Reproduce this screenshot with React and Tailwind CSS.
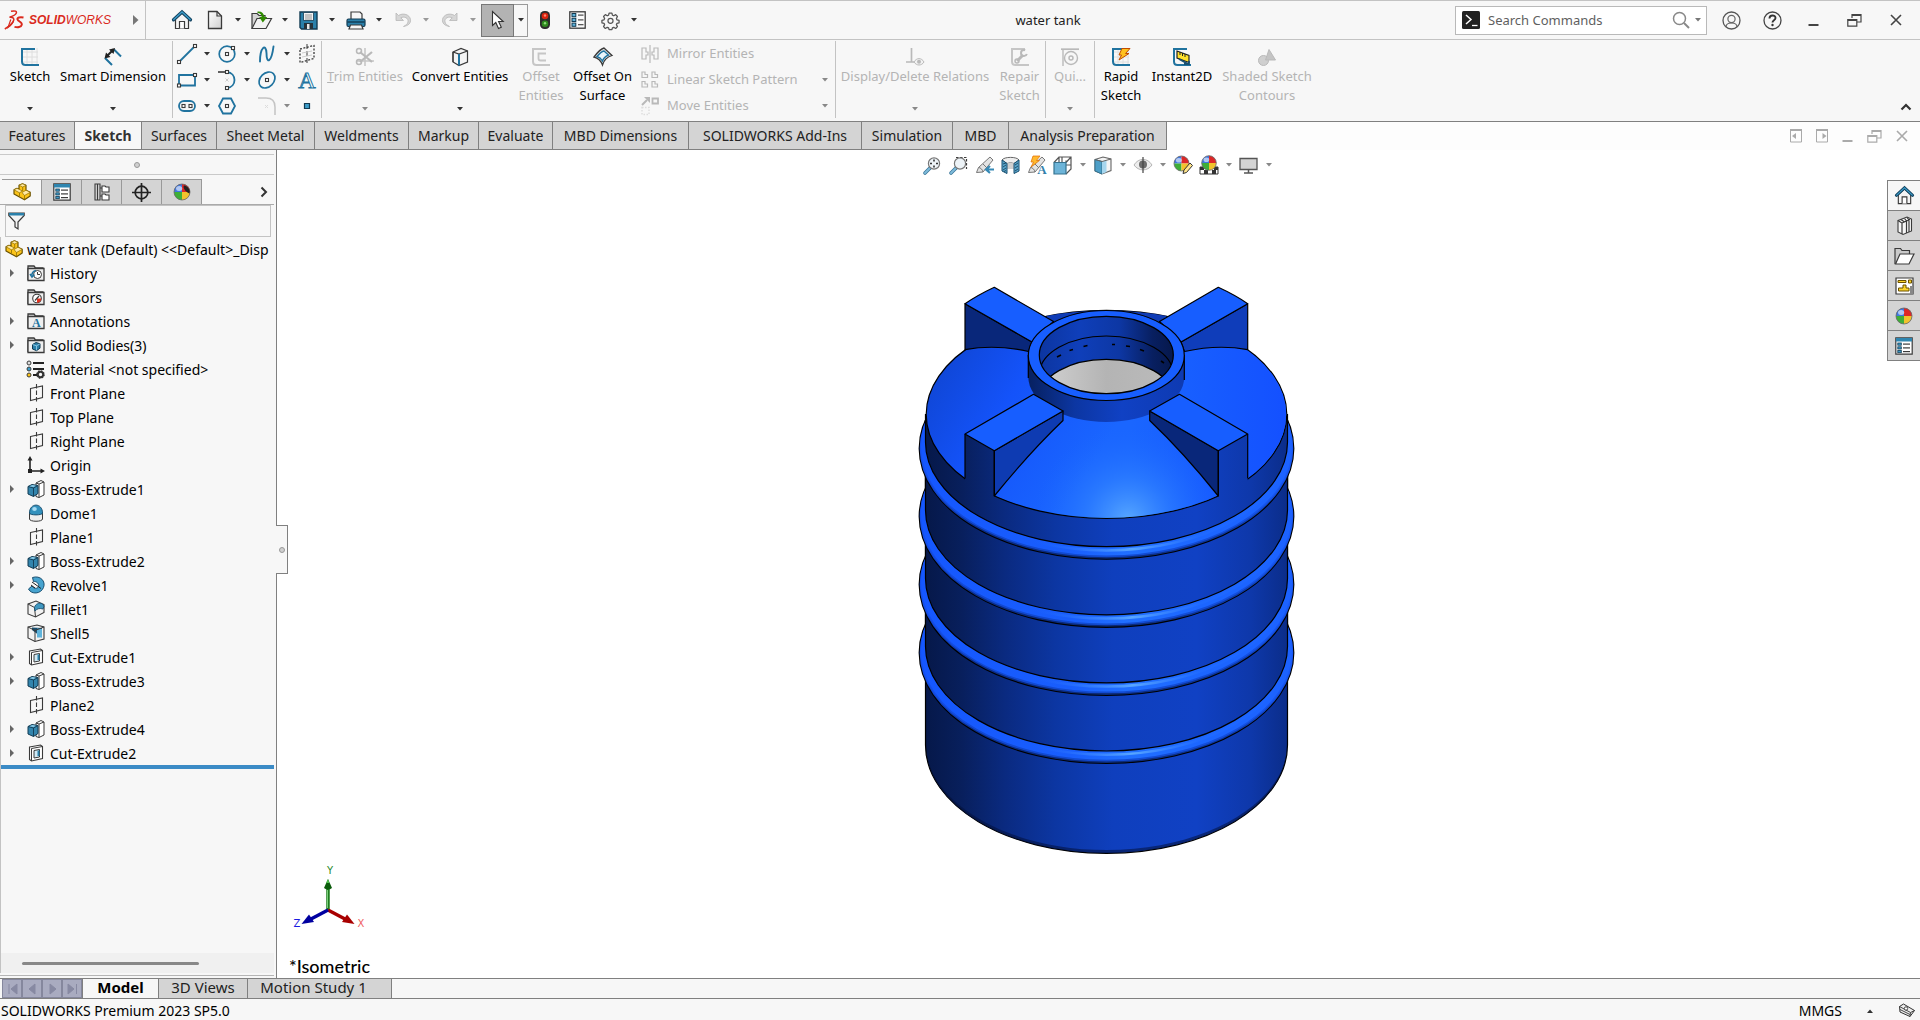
import React from "react";

const B = "#20739f";
const D = "#3a3a3a";
const G = "#b9b9b9";

function Svg({ w = 18, h = 18, vb, children, className = "" }) {
  return (
    <svg
      width={w}
      height={h}
      viewBox={vb || `0 0 ${w} ${h}`}
      fill="none"
      className={`shrink-0 overflow-visible ${className}`}
      aria-hidden="true"
    >
      {children}
    </svg>
  );
}

function Caret({ color = "#333" }) {
  return (
    <Svg w={6} h={4}>
      <path d="M0 0h6L3 3.5z" fill={color} />
    </Svg>
  );
}

/* ---------- title bar icons ---------- */

const DsLogo = () => (
  <Svg w={21} h={20}>
    <path d="M7 1.300C11 .3 13.500 1.200 12 3.600C11 5.200 8.500 6.300 5.500 7.200C9.500 7 11 8.800 9 12C7 15 4 17.300 .8 19" stroke="#da291c" strokeWidth="1.500" />
    <path d="M6.800 9.500L4 17.500C7 15.500 9 12.500 9.300 10.500" stroke="#da291c" strokeWidth="1.200" />
    <path d="M19.500 7.500C16 6.800 13 7.500 13.500 9.500C14 11.500 18.500 12 17.800 14.800C17.200 17.300 13.500 17.600 10.500 16.800" stroke="#da291c" strokeWidth="1.900" />
  </Svg>
);

const HomeIcon = ({ w = 20, h = 20 }) => (
  <Svg w={w} h={h} vb="0 0 20 20">
    <path d="M3.500 9v9.500h13V9L10 3z" fill="#f4f4f4" stroke={D} strokeWidth="1.200" />
    <path d="M7.500 18.500V11.500h5v7" stroke={D} fill="#fff" strokeWidth="1.200" />
    <path d="M1.500 9.800L10 2l8.500 7.800" stroke="#12415e" strokeWidth="3.200" strokeLinecap="round" />
    <path d="M1.800 9.600L10 2l8.200 7.600" stroke="#3c9cc9" strokeWidth="1.300" strokeLinecap="round" />
  </Svg>
);

const NewIcon = () => (
  <Svg w={16} h={20}>
    <defs>
      <linearGradient id="pg" x1="0" y1="0" x2="1" y2="1"><stop stopColor="#fff" /><stop offset="1" stopColor="#cfcfcf" /></linearGradient>
    </defs>
    <path d="M1.500 1.500h8.500l4.500 4.500v12.500h-13z" fill="url(#pg)" stroke={D} strokeWidth="1.300" />
    <path d="M10 1.500V6h4.500" stroke={D} strokeWidth="1.200" />
  </Svg>
);

const OpenIcon = () => (
  <Svg w={21} h={20}>
    <path d="M1 18.500V3.500h5l2 2h6v4" fill="#d4d4d4" stroke={D} strokeWidth="1.200" />
    <path d="M1 18.500L6 8.500h14.500L15 18.500z" fill="#f2f2f2" stroke={D} strokeWidth="1.200" />
    <path d="M6.500 1.500C10.500 1 13 3 13.300 7h3L11.800 12.500 8.200 7h2.500C10.500 4.500 9 3 6.500 3z" fill="#2f8a00" />
  </Svg>
);

const SaveIcon = () => (
  <Svg w={19} h={19}>
    <path d="M1 1h17v17H2.500L1 16.500z" fill="#2a80aa" stroke="#123a52" strokeWidth="1.400" />
    <path d="M4.500 1.500h10v8h-10z" fill="#f3f3f3" stroke="#123a52" strokeWidth=".8" />
    <path d="M6 4h7M6 6h7M6 8h7" stroke="#888" strokeWidth=".9" />
    <path d="M5 12h9v6H5z" fill="#26333b" />
    <path d="M8 13h2.500v5H8z" fill="#e8e8e8" />
  </Svg>
);

const PrintIcon = () => (
  <Svg w={20} h={19}>
    <path d="M5 8V1h9l2 2v5" fill="#f6f6f6" stroke={D} strokeWidth="1.200" />
    <rect x="1" y="8" width="18" height="7.500" rx="1.500" fill="#2a80aa" stroke="#123a52" strokeWidth="1.200" />
    <path d="M1.500 11h17" stroke="#123a52" strokeWidth="1.400" />
    <path d="M4.500 14h11l1.500 4h-14z" fill="#f6f6f6" stroke={D} strokeWidth="1.200" />
  </Svg>
);

const UndoIcon = ({ flip }) => (
  <Svg w={18} h={16} className={flip ? "-scale-x-100" : ""}>
    <path d="M2 1v7.500h7.500L6.800 5.800c3.500-1.800 8 .2 7.200 4.200-.4 2-2 3.200-4.500 4.500 5-.8 7.500-3.500 7-7C15.700 2.500 9 .5 4.500 3.500z" fill="#d6d6d6" stroke="#b8b8b8" strokeWidth=".8" />
  </Svg>
);

const CursorIcon = () => (
  <Svg w={14} h={20}>
    <path d="M1.500 1.500v14l3.300-3 2.700 6 2.800-1.300-2.700-5.700h4.600z" fill="#fff" stroke="#333" strokeWidth="1.100" />
  </Svg>
);

const TrafficIcon = () => (
  <Svg w={12} h={18}>
    <rect x="1" y="0" width="10" height="18" rx="4.500" fill="#2d2d2d" />
    <circle cx="6" cy="5" r="3.300" fill="#d9230f" /><circle cx="6" cy="4.500" r="1.200" fill="#ff8a70" />
    <circle cx="6" cy="12.800" r="3.300" fill="#2f8a1e" /><circle cx="6" cy="12.300" r="1.200" fill="#8fdc7a" />
  </Svg>
);

const ListIcon = () => (
  <Svg w={17} h={18}>
    <rect x=".8" y=".8" width="15.400" height="16.400" fill="#fafafa" stroke={D} strokeWidth="1.300" />
    {[2.500, 7.300, 12.100].map((y) => (
      <g key={y}>
        <rect x="3" y={y} width="3.800" height="3.200" fill="#5fb4dc" stroke="#123a52" />
        <path d={`M9 ${y + 1.600}h5.500`} stroke={D} strokeWidth="1.100" />
      </g>
    ))}
  </Svg>
);

const GearIcon = () => (
  <Svg w={17} h={17} vb="0 0 24 24">
    <path d="M10 1.500h4l.7 3 1.900.8 2.700-1.600 2.500 2.600-1.500 2.800.8 1.900 3 .8v3.400l-3 .8-.8 1.900 1.500 2.700-2.500 2.600-2.700-1.600-1.900.8-.7 2.600h-4l-.7-2.600-1.900-.8-2.700 1.600-2.500-2.600 1.500-2.700-.8-1.900-3-.8v-3.400l3-.8.8-1.900-1.500-2.800 2.500-2.600L7.400 5.300l1.900-.8z" stroke="#555" strokeWidth="1.800" strokeLinejoin="round" />
    <circle cx="12" cy="12.500" r="3.600" stroke="#555" strokeWidth="1.700" />
  </Svg>
);

const RestoreIcon = ({ color = "#444", s = 15 }) => (
  <Svg w={s} h={s} vb="0 0 15 15">
    <path d="M5 5V1.500h9V9h-4" stroke={color} strokeWidth="1.200" /><path d="M5 2h9" stroke={color} strokeWidth="2" />
    <path d="M.8 6.500h9v6.700h-9z" stroke={color} strokeWidth="1.200" /><path d="M.8 7h9" stroke={color} strokeWidth="2" />
  </Svg>
);
const CloseIcon = ({ color = "#444" }) => (
  <Svg w={12} h={12}><path d="M1 1l10 10M11 1L1 11" stroke={color} strokeWidth="1.600" /></Svg>
);
const MinIcon = ({ color = "#444" }) => (
  <Svg w={11} h={12}><path d="M.5 11h10" stroke={color} strokeWidth="2" /></Svg>
);

/* ---------- ribbon icons ---------- */

const Sq = ({ x, y, c = D }) => <rect x={x - 1.500} y={y - 1.500} width="3" height="3" fill="#fff" stroke={c} strokeWidth="1.100" />;
const GridLines = ({ x = 4, y = 1 }) => (
  <path d={`M${x + 3} ${y}v17M${x + 8} ${y}v17M${x + 13} ${y}v17M${x - 2} ${y + 4}h16M${x - 2} ${y + 9}h16M${x - 2} ${y + 14}h16`} stroke="#dedede" />
);

const SketchIcon = ({ c = B, children, grid = true }) => (
  <Svg w={20} h={20}>
    {grid && <GridLines />}
    <path d="M15 2H2v12.500q0 3.500 3.500 3.500H19" stroke={c} strokeWidth="2" />
    {children}
  </Svg>
);
const SmartDimIcon = () => (
  <Svg w={20} h={20}>
    <path d="M2 11l7 7M11 2.500l7 7" stroke={B} strokeWidth="2" />
    <path d="M3.500 9.500l7-7" stroke="#222" strokeWidth="2" />
    <path d="M1.500 11.500l1.500-6 4.500 4.500zM12 1l-1.500 6L6 2.500z" fill="#222" />
  </Svg>
);
const LineIcon = () => (<Svg w={20} h={20}><path d="M2 18L18 2" stroke={B} strokeWidth="1.800" /><Sq x={2} y={18} /><Sq x={18} y={2} /></Svg>);
const RectIcon = () => (<Svg w={20} h={16}><path d="M2 3h16v10.500H2z" stroke={B} strokeWidth="1.800" /><Sq x={2} y={13.500} /><Sq x={18} y={3} /></Svg>);
const SlotIcon = () => (<Svg w={18} h={12}><rect x="1" y="1" width="16" height="10" rx="5" stroke={B} strokeWidth="1.800" /><Sq x={5.500} y={6} /><Sq x={12.500} y={6} /></Svg>);
const CircleIcon = () => (<Svg><circle cx="9" cy="9" r="7.800" stroke={B} strokeWidth="1.700" /><Sq x={9} y={9} /><Sq x={15} y={3} /></Svg>);
const ArcIcon = () => (
  <Svg w={20} h={20}>
    <path d="M1 2h9" stroke={D} strokeWidth="1.600" /><path d="M10 2c10 1 10 15 0 16" stroke={B} strokeWidth="1.800" />
    <path d="M8.500 8.500l3 3m0-3l-3 3" stroke="#ccc" /><Sq x={10} y={2} /><Sq x={10} y={18} />
  </Svg>
);
const PolyIcon = () => (<Svg><path d="M5 1.500h8L17 9l-4 7.500H5L1 9z" stroke={B} strokeWidth="1.800" /><Sq x={9} y={9} /></Svg>);
const SplineIcon = () => (<Svg><path d="M2 16.500C2 2 8-2 8.500 8c0 12 5 9 7-6.500" stroke={B} strokeWidth="1.900" strokeLinecap="round" /></Svg>);
const EllipseIcon = () => (<Svg><ellipse cx="9" cy="9" rx="9" ry="6.800" transform="rotate(-45 9 9)" stroke={B} strokeWidth="1.700" /><Sq x={9} y={9} /></Svg>);
const FilletGrayIcon = () => (<Svg><path d="M0 1h8c6 0 9 3 9 9v8" stroke="#c4c4c4" strokeWidth="1.500" /><path d="M7 8l3 3m0-3l-3 3" stroke="#ddd" /></Svg>);
const PlaneDashIcon = () => (
  <Svg w={18} h={20}>
    <path d="M2 5l14-3.500v13L2 18.500z" stroke={D} strokeWidth="1.300" strokeDasharray="2 1.500" />
    <path d="M9 0v20" stroke={D} strokeDasharray="5 2" /><path d="M4 9l10-2M4 13l10-2" stroke="#ccc" />
  </Svg>
);
const TextIcon = () => (
  <Svg w={20} h={18}>
    <text x="10" y="17" fontFamily="Liberation Serif, serif" fontSize="24" textAnchor="middle" fill="#fff" stroke={B} strokeWidth="1">A</text>
  </Svg>
);
const PointIcon = () => (<Svg w={8} h={8}><path d="M1.500 1.500h5v5h-5z" fill="#3c9cc9" stroke="#123a52" strokeWidth="1.200" /></Svg>);

const TrimIcon = () => (
  <Svg w={20} h={20}>
    <path d="M10 1v18M2 14h17" stroke="#c6c6c6" strokeWidth="1.600" />
    <path d="M5 5l12 10M5 15L17 5" stroke={G} strokeWidth="2.200" />
    <circle cx="4" cy="4" r="2.500" stroke={G} strokeWidth="1.500" /><circle cx="4" cy="15" r="2.500" stroke={G} strokeWidth="1.500" />
  </Svg>
);
const ConvertIcon = () => (
  <Svg w={18} h={20}>
    <path d="M2 5l8-3.500 6.500 2.500v11L8 18.500 2 15z" fill="#f4f4f4" stroke={D} strokeWidth="1.200" />
    <path d="M2 5l6 2 8.500-3M2 5v10" stroke={D} strokeWidth="1.200" />
    <path d="M8 7v11.500" stroke={B} strokeWidth="2" />
  </Svg>
);
const OffsetIcon = () => (
  <Svg w={20} h={20}>
    <path d="M15 2H2v12.500q0 3.500 3.500 3.500H19" stroke="#c6c6c6" strokeWidth="2" /><path d="M15 6.500H7.500v5q0 2 2 2H15" stroke="#c6c6c6" strokeWidth="1.800" />
  </Svg>
);
const OffsetSurfIcon = () => (
  <Svg w={20} h={20}>
    <path d="M1 10C4 6 7 2 11 1l8 7.500c-5 1.500-8 4.500-9.500 9.500C8 14 5 11 1 10z" fill="#e9e9e9" stroke={D} strokeWidth="1.300" />
    <path d="M4 9.500C6.500 6.500 8.500 4.500 11 4l4.500 4C12 9.500 10.500 11 9.500 14 8 11.500 6.500 10.300 4 9.500z" fill="#eaf6fc" stroke={B} strokeWidth="1.400" />
  </Svg>
);
const MirrorIcon = () => (
  <Svg><path d="M9 0v18" stroke={G} strokeWidth="1.200" /><path d="M1 3h4v4h2v3H5v4H1zM17 3h-4v4h-2v3h2v4h4z" stroke={G} strokeWidth="1.200" /></Svg>
);
const PatternIcon = () => (
  <Svg>{[[1, 1], [11, 1], [1, 10.500], [11, 10.500]].map(([x, y]) => (
    <path key={`${x}${y}`} d={`M${x} ${y}h3v2.500h2.500v3H${x}z`} stroke={G} strokeWidth="1.200" />
  ))}</Svg>
);
const MoveIcon = () => (
  <Svg>
    <path d="M1 8L6 3" stroke={G} strokeWidth="2" /><path d="M3 0h6v6z" fill={G} /><path d="M11.500 1.500h5.500v5h-5.500z" stroke={G} strokeWidth="1.800" />
    <path d="M1 10.500h7v7H1z" stroke="#dedede" strokeWidth="1.500" strokeDasharray="1.500 1.500" />
  </Svg>
);
const DisplayRelIcon = () => (
  <Svg w={20} h={20}>
    <path d="M6.500 1v14M1 15h10" stroke={G} strokeWidth="1.700" /><path d="M9 15c2.500-4.500 7.500-4.500 10 0-2.500 4-7.500 4-10 0z" fill="#f2f2f2" stroke={G} /><circle cx="14" cy="14.800" r="2" fill={G} />
  </Svg>
);
const RepairIcon = () => (
  <SketchIcon c="#c6c6c6" grid={false}>
    <path d="M7 14l6-6" stroke={G} strokeWidth="3" /><circle cx="14" cy="6" r="3" stroke={G} strokeWidth="2" strokeDasharray="14 5" strokeDashoffset="-1" /><circle cx="7" cy="14" r="2" stroke={G} strokeWidth="1.500" />
  </SketchIcon>
);
const QuickIcon = () => (
  <Svg w={18} h={18}><path d="M0 1.200h18" stroke={G} strokeWidth="1.700" /><path d="M2 1v17" stroke={G} strokeWidth="1.400" /><circle cx="10" cy="10" r="6.500" stroke={G} strokeWidth="1.400" /><circle cx="10" cy="10" r="2" stroke={G} strokeWidth="1.500" /></Svg>
);
const RapidIcon = () => (
  <SketchIcon><path d="M11 1.500h8l-4.500 5h3.500L8 13l2.500-5H8z" fill="#ffc21f" stroke="#c14b00" /></SketchIcon>
);
const InstantIcon = () => (
  <SketchIcon grid={false}>
    <path d="M5 4l12 4.500v7L5 11z" fill="#ffe12b" stroke="#222" strokeWidth="1.200" /><path d="M8 5v3M10.500 6v3M13 7v3" stroke="#222" /><path d="M7 12l9 5M12 17h5v-3" stroke="#184f70" strokeWidth="1.800" />
  </SketchIcon>
);
const ShadedIcon = () => (
  <Svg><circle cx="5.500" cy="12.500" r="5" fill="#cfcfcf" stroke={G} /><path d="M11 1.500l6.500 10.500H7.500z" fill="#c4c4c4" stroke={G} /></Svg>
);

/* ---------- feature tree icons ---------- */

const PartIcon = () => (
  <Svg w={18} h={18}>
    <path d="M6 2.200L9.500.800 13 2.300V7.200L17.200 9.300V13L11.500 16.800 1 11V6.800L4 5.300 6 6.200z" fill="#fcc419" stroke="#6b5200" strokeWidth="1.200" strokeLinejoin="round" />
    <path d="M6 2.200L9.500.800 13 2.300 9.700 4zM1 6.800L4 5.300 9.500 8l-3 1.800zM9 9.500L13 7.200l4.200 2.100-5.700 3.200z" fill="#ffe9a3" stroke="#8f6e00" strokeWidth=".7" strokeLinejoin="round" />
    <path d="M9.700 4v4M6.500 9.800V13M11.500 12.500v4" stroke="#8f6e00" strokeWidth=".8" />
  </Svg>
);
const PropsIcon = ({ w = 18, h = 18 }) => (
  <Svg w={w} h={h} vb="0 0 18 18">
    <path d="M.8.800h16.400v16.400H.8z" fill="#fff" stroke={D} strokeWidth="1.200" /><path d="M1 1h16v3.500H1z" fill="#2f86b0" />
    {[6, 9.800, 13.500].map((y) => (<g key={y}><rect x="2.800" y={y} width="3.500" height="2.200" fill="#3c9cc9" stroke="#123a52" strokeWidth=".8" /><path d={`M8 ${y + 1.100}h7`} stroke={D} strokeWidth="1.200" /></g>))}
  </Svg>
);
const ConfigIcon = () => (
  <Svg w={16} h={18}>
    <path d="M1 1h5v16H1zM3.500 1v16M6 5h4M6 13h4" stroke={D} strokeWidth="1.100" /><path d="M8 3h3l1 1h3v5H8zM8 11h3l1 1h3v5H8z" fill="#fff" stroke={D} strokeWidth="1.100" />
  </Svg>
);
const TargetIcon = () => (<Svg w={19} h={19}><circle cx="9.500" cy="9.500" r="6.300" stroke="#222" strokeWidth="1.700" /><path d="M9.500 0v19M0 9.500h19" stroke="#222" strokeWidth="1.700" /></Svg>);
const Ball = ({ cx, cy, r }) => (
  <g>
    <path d={`M${cx} ${cy}V${cy - r}A${r} ${r} 0 0 0 ${cx - r} ${cy}z`} fill="#3f77e0" />
    <path d={`M${cx} ${cy}V${cy - r}A${r} ${r} 0 0 1 ${cx + r} ${cy}z`} fill="#dd2727" />
    <path d={`M${cx} ${cy}V${cy + r}A${r} ${r} 0 0 1 ${cx - r} ${cy}z`} fill="#3fae38" />
    <path d={`M${cx} ${cy}V${cy + r}A${r} ${r} 0 0 0 ${cx + r} ${cy}z`} fill="#f2c22c" />
    <circle cx={cx} cy={cy} r={r} stroke="#666" strokeWidth=".8" />
    <ellipse cx={cx - r / 2.800} cy={cy - r / 2.300} rx={r / 2.600} ry={r / 3.200} fill="#fff" opacity=".6" />
  </g>
);
const BallIcon = ({ dark }) => (<Svg><Ball cx={9} cy={9} r={8} />{dark && <path d="M11 2.500C9.500 4 12 9 16.500 10.500C17.500 7 15 3 11 2.500z" fill="#222" />}</Svg>);
const FunnelIcon = () => (
  <Svg w={17} h={18}><path d="M.8 1h15.400v2.500L10 10v7l-3-2v-5L.8 3.500z" fill="#f4f4f4" stroke={D} strokeWidth="1.200" /><path d="M1 1h15v2.500H1z" fill="#2a80aa" /></Svg>
);
const Folder = ({ children }) => (
  <Svg w={18} h={18}><path d="M1 16V2h6l1.500 2H16.500" fill="#dcdcdc" stroke={D} strokeWidth="1.300" /><path d="M1 4.500h16v12H1z" fill="#efefef" stroke={D} strokeWidth="1.300" />{children}</Svg>
);
const HistoryIcon = () => (<Folder><circle cx="10.500" cy="10.500" r="4" fill="#fff" stroke={D} /><path d="M10.500 8v2.500h2.500" stroke={D} /><path d="M9 6.500c-3 .5-4.500 3-4 5M3 10l2 3 2.500-2.500" stroke={B} strokeWidth="1.500" /></Folder>);
const SensorIcon = () => (<Folder><circle cx="10" cy="10.500" r="4.300" fill="#fff" stroke={D} strokeWidth="1.100" /><path d="M10 10.500l4.300 0A4.300 4.300 0 0 1 10 14.800z" fill="#e0301e" /><path d="M8 12.500l4-4.500" stroke={D} strokeWidth="1.200" /></Folder>);
const AnnoIcon = () => (<Folder><text x="9.300" y="14.800" fontFamily="Liberation Serif, serif" fontSize="12" fontWeight="700" textAnchor="middle" fill={B}>A</text></Folder>);
const SolidIcon = () => (<Folder><path d="M5.500 8.500l3.500-2 4 1.200v4.500l-3.500 2.500-4-1.700z" fill="#2a80aa" stroke="#123a52" /><path d="M5.500 8.500l4 1.300 3.500-2M9.500 9.800v4.500" stroke="#9fd4ee" strokeWidth=".8" /></Folder>);
const MaterialIcon = () => (
  <Svg w={19} h={19}>
    <path d="M7 3h11M7 9h11M7 15h5" stroke="#222" strokeWidth="2" />
    <circle cx="3" cy="3" r="2" fill="#ddd" stroke={D} /><circle cx="3" cy="9" r="2" fill="#3c9cc9" stroke={D} /><circle cx="3" cy="15" r="2" fill="#fcc419" stroke={D} />
    <circle cx="14.500" cy="14.500" r="2.700" stroke="#333" strokeWidth="2" /><circle cx="14.500" cy="14.500" r="3.700" stroke="#333" strokeWidth="1.200" strokeDasharray="1.500 1.400" />
  </Svg>
);
const PlaneIcon = () => (<Svg><path d="M3.500 4.500L15.500 2v11.500L3.500 16.500z" stroke={D} strokeWidth="1.100" /><path d="M9.500 0v18" stroke={D} strokeWidth="1.100" strokeDasharray="4.500 2" /></Svg>);
const OriginIcon = () => (<Svg w={18} h={18}><path d="M3 3v12h12" stroke="#222" strokeWidth="1.600" /><path d="M3 0l2.500 4.500h-5zM18 15l-4.500-2.500v5z" fill="#222" /><rect x="1" y="13" width="4" height="4" fill="#222" /></Svg>);
const BossIcon = () => (
  <Svg>
    <path d="M9 3l5-2.500 3 1.500v13l-5 2.500-3-1z" fill="#fff" stroke={D} /><path d="M12 4v13.500M12 4l5-2M9 3l3 1" stroke={D} />
    <path d="M1 6.500l4-2 6 1v8l-4.500 3L1 14z" fill="#3385ad" stroke="#123a52" /><path d="M1 6.500l5.500 1.500 4.500-2.500M6.500 8v8.500" stroke="#123a52" strokeWidth=".9" /><path d="M2.500 6.300l3-1.200 3.500.6-2.600 1.400z" fill="#8fcdea" />
  </Svg>
);
const DomeIcon = () => (<Svg><path d="M2.500 9v6c0 3 13 3 13 0V9z" fill="#eee" stroke={D} /><path d="M2.500 9C2.500-1.500 15.500-1.500 15.500 9c0 2.500-13 2.500-13 0z" fill="#3391bd" stroke="#184f70" /><ellipse cx="7.500" cy="5" rx="2.300" ry="2" fill="#a6dbf3" /></Svg>);
const RevolveIcon = () => (
  <Svg><path d="M5.500 1.500c8-2.500 13.500 4 11 10-2.500 6.500-12 7.500-15 1.500l3.500-3c2 3 5.500 3 6.500.5S9.500 5 6.500 5.500z" fill="#46a3cf" stroke="#184f70" /><path d="M5 6l9 6.500M4 9l4 3" stroke="#222" /></Svg>
);
const FilletIcon = () => (<Svg><path d="M1 4l8-3 8 3.500v8L8.500 17 1 14z" fill="#f2f2f2" stroke={D} strokeWidth="1.100" /><path d="M1 4l6.500 3.500 1 9.500" stroke={D} /><path d="M7.500 7.500C8.500 3.500 12 3 15 3.500l2 2.500-1 3c-3-1-6-.5-8 2z" fill="#3f97c0" stroke="#184f70" strokeWidth=".9" /></Svg>);
const ShellIcon = () => (<Svg><path d="M1 3l9-2 7 2v12l-9 2.500L1 14z" fill="#f2f2f2" stroke={D} strokeWidth="1.100" /><path d="M5 3.500l10 .5v9.500L5 6z" fill="#184f70" /><path d="M10 4.500l5 .5v8.500h-5z" fill="#5fb4dc" /><path d="M1 3l7 3.500v11M8 6.500L17 3" stroke={D} /></Svg>);
const CutIcon = () => (<Svg><path d="M2.500 3l11-2 2 1.500v12l-11 2.500-2-1.500z" fill="#fff" stroke={D} strokeWidth="1.100" /><path d="M4.500 4.500l11-2M4.500 4.500V17" stroke={D} /><path d="M7 6.500l5.500-1v7.500L7 14z" fill="#cfe9f5" stroke={D} /><path d="M10.500 6.500h2V12h-2z" fill="#2a80aa" /></Svg>);

/* ---------- heads-up toolbar icons ---------- */

const ZoomIcon = ({ area }) => (
  <Svg w={19} h={19}>
    {area && <path d="M7 1.500h10.500V13" stroke={D} strokeDasharray="2.500 1.500" strokeWidth="1.200" />}
    <path d="M2 17l5-5" stroke="#3a7699" strokeWidth="3.600" strokeLinecap="round" /><path d="M2 17l5-5" stroke="#7fbcdc" strokeWidth="2" strokeLinecap="round" />
    <circle cx="11" cy="7.500" r="5.600" fill="#edf3f7" stroke="#777" strokeWidth="1.200" />
    {!area && <path d="M11 3.500v2M11 9.500v2M7 7.500h2M13 7.500h2" stroke="#333" strokeWidth="1.600" />}
  </Svg>
);
const Scope = () => (<g><path d="M1.500 16.500l2-5L15 1l3 3L8 16z" fill="#e3e3e3" stroke="#777" /><path d="M3.500 11.500c2 0 4 2 4.500 4.500M8 8l4 4" stroke="#777" /></g>);
const PrevViewIcon = () => (<Svg w={20} h={19}><Scope /><path d="M19 13.500h-7m3-3.500l-4 3.500 4 3.500" stroke="#3689b5" strokeWidth="2.200" /></Svg>);
const SectionIcon = () => (
  <Svg w={19} h={19}>
    <path d="M1 4C3 .5 16 .5 18 4L13 7.500Q9.500 6 6 7.500z" fill="#eee" stroke="#666" />
    <path d="M6 7.500Q9.500 6 13 7.500V13H6z" fill="#d0d0d0" />
    <path d="M1 4l5 3.500V17.500L1 15zM13 7.500L18 4v11l-5 2.500z" fill="#5aa6cc" stroke="#184f70" />
    <path d="M2 8l3-1M2 11l3-2M2 14l3-2M3 15.500l2-1M14 9l3-2M14 12l3-2M14 15l3-2" stroke="#123a52" strokeWidth=".8" />
  </Svg>
);
const DynIcon = () => (<Svg w={20} h={19}><Scope /><path d="M6 0h7L9.500 4.500h3L4 11l2.500-5H4z" fill="#ffb92e" stroke="#e06c00" strokeWidth=".7" /><text x="15" y="18" fontFamily="Liberation Serif, serif" fontSize="13" fontWeight="700" textAnchor="middle" fill="#3380ab">A</text></Svg>);
const ViewIcon = () => (<Svg w={19} h={19}><path d="M1 6.500L6 1h12v12l-5 5M6 1v5M18 1l-5 5.500M13 9h5M13 4.500v2M9 1v5" stroke="#555" strokeWidth="1.200" /><path d="M1 6.500h12V18H1z" fill="#6db4d8" stroke="#35728f" strokeWidth="1.200" /></Svg>);
const StyleIcon = () => (<Svg w={18} h={19}><path d="M1 3.500L9 1l8 2v11.500L8 18 1 15z" fill="#f4f4f4" stroke="#666" strokeWidth="1.100" /><path d="M1 3.500l7 2V18l-7-3z" fill="#4d9fc8" stroke="#35728f" /><path d="M8 5.500L12.500 4v12L8 18z" fill="#a6d6ee" /><path d="M1 3.500l7 2L17 3" stroke="#666" /></Svg>);
const EyeIcon = () => (<Svg w={20} h={18}><path d="M1 9c4.500-7.500 13.500-7.500 18 0-4.500 6.500-13.500 6.500-18 0z" fill="#ededed" stroke="#b5b5b5" /><circle cx="10" cy="8.500" r="4" fill="#6d6d6d" /><path d="M10 1v16" stroke="#444" strokeWidth="1.200" /></Svg>);
const BallPenIcon = () => (<Svg w={20} h={20}><Ball cx={8.500} cy={8.500} r={7.500} /><path d="M10 18.500l1-3.500 6-7 2.500 2.500-6 7z" fill="#ffe48a" stroke="#333" /></Svg>);
const SceneIcon = () => (<Svg w={20} h={20}><path d="M1 12h18v7H1z" fill="#fff" stroke="#333" /><path d="M1 12h4v3H1zM5 15h4v4H5zM13 15h4v4h-4zM15 12h4v3h-4z" fill="#333" /><Ball cx={10} cy={8} r={7.300} /></Svg>);
const MonitorIcon = () => (<Svg w={19} h={17}><path d="M1 1.500h17v11H1z" fill="#d4d4d4" stroke="#555" strokeWidth="1.300" /><path d="M9.500 13v3M5 16h9" stroke="#555" strokeWidth="1.500" /></Svg>);

const BooksIcon = () => (<Svg w={17} h={19}><path d="M2 4.500L11 1l4.500 2v12L7 18.500 2 16z" fill="#f6f6f6" stroke={D} strokeWidth="1.100" /><path d="M2 4.500L6 7v11M6 7l8-3.500M8.500 2.500L10.500 5v12M5 3.500L8.500 6M11 1.500l2 2.500v12" stroke={D} strokeWidth="1.200" /></Svg>);
const FolderOpenIcon = () => (<Svg w={21} h={18}><path d="M1 17V1.500h5.500l1.500 2h7.500V7" fill="#c9c9c9" stroke={D} strokeWidth="1.200" /><path d="M1.500 17L6 7h14l-5 10z" fill="#fff" stroke={D} strokeWidth="1.200" /></Svg>);
const PaletteIcon = () => (<Svg w={19} h={18}><path d="M1 1h17v16H1z" fill="#fff" stroke={D} strokeWidth="1.200" /><path d="M3 3.500h8v2H3zM13.500 3h3v3h-3zM8 8h3v3h3v3H3.500v-3H8z" fill="#fcd52a" stroke="#6b5000" /><path d="M15 9h3v8h-3z" fill="#888" /></Svg>);

/* ---------- shared controls ---------- */

function CaretButton({ label, color, className = "" }) {
  return (
    <button aria-label={label} className={`flex items-center justify-center ${className}`}>
      <Caret color={color} />
    </button>
  );
}

function QuickButton({ label, icon, menu, disabled }) {
  return (
    <div className="flex h-8 items-center">
      <button aria-label={label} className="flex h-full w-[33px] items-center justify-center">{icon}</button>
      {menu && <CaretButton label={`${label} options`} color={disabled ? "#999" : "#333"} className="h-full w-[14px]" />}
    </div>
  );
}

function BigButton({ icon, lines, width, disabled, menu, underline }) {
  return (
    <button className={`flex flex-col items-center pt-1.5 text-[13px] leading-[19px] ${width} ${disabled ? "text-[#b4b4b4]" : "text-black"}`}>
      <span className="flex h-[21px] items-center">{icon}</span>
      <span className="flex-1 whitespace-nowrap text-center">
        {lines.map((l, i) => (
          <span key={l} className="block">
            {underline && i === 0 ? (<><u>{l[0]}</u>{l.slice(1)}</>) : l}
          </span>
        ))}
      </span>
      {menu && <span className="mb-2"><Caret color={disabled ? "#888" : "#333"} /></span>}
    </button>
  );
}

const Sep = () => <div className="my-px w-px shrink-0 bg-[#c3c3c3]" />;

/* ---------- sections ---------- */

function TitleBar() {
  return (
    <header className="flex h-10 items-center border-y border-[#c3c3c3] bg-[#f7f7f7]">
      <div className="flex h-full w-[146px] items-center border-r border-[#c3c3c3] pl-1">
        <DsLogo />
        <span className="ml-1 flex-1 font-['Liberation_Sans',sans-serif] text-[12px] italic text-[#da291c]"><b>SOLID</b>WORKS</span>
        <button aria-label="Show menu" className="mr-1.5"><Svg w={6} h={10}><path d="M0 0l5.500 5L0 10z" fill="#777" /></Svg></button>
      </div>
      <nav aria-label="Quick access" className="ml-[19px] flex items-center">
        <QuickButton label="Home" icon={<HomeIcon />} />
        <QuickButton label="New" icon={<NewIcon />} menu />
        <QuickButton label="Open" icon={<OpenIcon />} menu />
        <QuickButton label="Save" icon={<SaveIcon />} menu />
        <QuickButton label="Print" icon={<PrintIcon />} menu />
        <QuickButton label="Undo" icon={<UndoIcon />} menu disabled />
        <QuickButton label="Redo" icon={<UndoIcon flip />} menu disabled />
        <div className="ml-px flex h-[33px]">
          <button aria-label="Select" className="flex w-[33px] items-center justify-center border border-[#777] bg-[#b3b3b3]"><CursorIcon /></button>
          <CaretButton label="Select options" className="w-[14px] border border-l-0 border-[#999]" />
        </div>
        <QuickButton label="Rebuild" icon={<TrafficIcon />} />
        <QuickButton label="File properties" icon={<ListIcon />} />
        <QuickButton label="Options" icon={<GearIcon />} menu />
      </nav>
      <h1 className="flex-1 pt-0.5 text-center text-[13px] text-[#222]">water tank</h1>
      <div className="mr-1 flex h-[29px] w-[252px] items-center border border-[#b9b9b9] bg-white pl-1.5">
        <Svg><rect width="18" height="18" rx="1.500" fill="#222" /><path d="M4 4l5 4.500L4 13" stroke="#fff" strokeWidth="1.500" /><path d="M10 14.500h5.500" stroke="#fff" strokeWidth="1.300" /></Svg>
        <input aria-label="Search Commands" placeholder="Search Commands" className="ml-2 w-0 flex-1 bg-transparent pt-0.5 text-[13px] outline-none placeholder:text-[#5f5f5f]" />
        <button aria-label="Search"><Svg><circle cx="7.500" cy="7.500" r="6" stroke="#888" strokeWidth="1.500" /><path d="M12 12l5 5" stroke="#888" strokeWidth="2" /></Svg></button>
        <CaretButton label="Search options" color="#777" className="w-4" />
      </div>
      <div className="flex items-center pr-1">
        <button aria-label="Account" className="flex w-[41px] justify-center"><Svg w={19} h={19}><circle cx="9.500" cy="9.500" r="8.500" stroke="#555" strokeWidth="1.300" /><circle cx="9.500" cy="8" r="3.600" stroke="#666" strokeWidth="1.200" /><path d="M4 16c0-3 2.500-4 5.500-4s5.500 1 5.500 4" stroke="#666" strokeWidth="1.200" /></Svg></button>
        <button aria-label="Help" className="flex w-[41px] justify-center"><Svg w={19} h={19}><circle cx="9.500" cy="9.500" r="8.500" stroke="#444" strokeWidth="1.300" /><path d="M6.500 7.500c0-4 6-4 6-.5 0 2.300-3 2.200-3 4.500" stroke="#333" strokeWidth="1.900" /><circle cx="9.500" cy="14" r="1.200" fill="#333" /></Svg></button>
        <button aria-label="Minimize" className="flex w-[41px] justify-center"><MinIcon /></button>
        <button aria-label="Restore" className="flex w-[41px] justify-center"><RestoreIcon /></button>
        <button aria-label="Close" className="flex w-[41px] justify-center"><CloseIcon /></button>
      </div>
    </header>
  );
}

const SKETCH_TOOLS = [
  ["Line", LineIcon, 1], ["Circle", CircleIcon, 1], ["Spline", SplineIcon, 1], ["Plane", PlaneDashIcon, 0],
  ["Rectangle", RectIcon, 1], ["Arc", ArcIcon, 1], ["Ellipse", EllipseIcon, 1], ["Text", TextIcon, 0],
  ["Slot", SlotIcon, 1], ["Polygon", PolyIcon, 0], ["Fillet", FilletGrayIcon, 2], ["Point", PointIcon, 0],
];

const ENTITY_TOOLS = [
  ["Mirror Entities", MirrorIcon, false],
  ["Linear Sketch Pattern", PatternIcon, true],
  ["Move Entities", MoveIcon, true],
];

function Ribbon() {
  return (
    <section aria-label="Sketch commands" className="flex h-[82px] border-b border-[#808080] bg-[#f7f7f7] pb-0.5">
      <div className="flex pr-1.5">
        <BigButton width="w-[60px]" icon={<SketchIcon />} lines={["Sketch"]} menu />
        <BigButton width="w-[106px]" icon={<SmartDimIcon />} lines={["Smart Dimension"]} menu />
      </div>
      <Sep />
      <div className="grid grid-cols-[40px_40px_40px_24px] grid-rows-3 px-0.5 pt-px">
        {SKETCH_TOOLS.map(([name, Icon, menu]) => (
          <div key={name} className="flex items-center">
            <button aria-label={name} className="flex w-6 items-center justify-center"><Icon /></button>
            {menu > 0 && <CaretButton label={`${name} options`} color={menu === 2 ? "#888" : "#333"} className="h-6 w-4" />}
          </div>
        ))}
      </div>
      <Sep />
      <div className="flex">
        <BigButton width="w-[86px]" icon={<TrimIcon />} lines={["Trim Entities"]} menu disabled underline />
        <BigButton width="w-[104px]" icon={<ConvertIcon />} lines={["Convert Entities"]} menu />
        <BigButton width="w-[58px]" icon={<OffsetIcon />} lines={["Offset", "Entities"]} disabled />
        <BigButton width="w-[65px]" icon={<OffsetSurfIcon />} lines={["Offset On", "Surface"]} />
        <div className="grid w-[200px] grid-rows-3 pl-1.5 pr-1 pt-px text-[13px] text-[#b4b4b4]">
          {ENTITY_TOOLS.map(([name, Icon, menu]) => (
            <div key={name} className="flex items-center">
              <button className="flex flex-1 items-center gap-2"><Icon />{name}</button>
              {menu && <CaretButton label={`${name} options`} color="#888" className="h-6 w-3" />}
            </div>
          ))}
        </div>
      </div>
      <Sep />
      <div className="flex">
        <BigButton width="w-[158px]" icon={<DisplayRelIcon />} lines={["Display/Delete Relations"]} menu disabled />
        <BigButton width="w-[51px]" icon={<RepairIcon />} lines={["Repair", "Sketch"]} disabled />
      </div>
      <Sep />
      <BigButton width="w-[48px]" icon={<QuickIcon />} lines={["Qui..."]} menu disabled />
      <Sep />
      <div className="flex">
        <BigButton width="w-[52px]" icon={<RapidIcon />} lines={["Rapid", "Sketch"]} />
        <BigButton width="w-[70px]" icon={<InstantIcon />} lines={["Instant2D"]} />
        <BigButton width="w-[100px]" icon={<ShadedIcon />} lines={["Shaded Sketch", "Contours"]} disabled />
      </div>
      <button aria-label="Collapse ribbon" className="mb-2 ml-auto mr-2 self-end"><Svg w={12} h={8}><path d="M1.500 6.500L6 2l4.500 4.500" stroke="#333" strokeWidth="2.200" /></Svg></button>
    </section>
  );
}

const TABS = [
  ["Features", "w-[75px]"], ["Sketch", "w-[67px]"], ["Surfaces", "w-[75px]"], ["Sheet Metal", "w-[98px]"], ["Weldments", "w-[94px]"],
  ["Markup", "w-[70px]"], ["Evaluate", "w-[74px]"], ["MBD Dimensions", "w-[136px]"], ["SOLIDWORKS Add-Ins", "w-[173px]"],
  ["Simulation", "w-[91px]"], ["MBD", "w-[56px]"], ["Analysis Preparation", "w-[158px]"],
];

function CommandTabs() {
  return (
    <div className="flex h-7 bg-[#fdfdfd]">
      <div role="tablist" className="flex border-b border-[#808080] text-[14px] text-[#222]">
        {TABS.map(([name, width]) => (
          <button
            key={name}
            role="tab"
            aria-selected={name === "Sketch"}
            className={`whitespace-nowrap border-r border-[#808080] ${width} ${name === "Sketch" ? "bg-[#f7f7f7] font-bold text-[#333]" : "bg-[#d4d4d4]"}`}
          >
            {name}
          </button>
        ))}
      </div>
      <div className="ml-auto flex items-center gap-3.5 pr-3">
        <button aria-label="Dock left"><Svg w={12} h={14}><path d="M.5 1h11v12H.5z" stroke="#aaa" /><path d="M0 1h12" stroke="#aaa" strokeWidth="2" /><path d="M6 4v6L2 7z" fill="#aaa" /></Svg></button>
        <button aria-label="Dock right"><Svg w={12} h={14}><path d="M.5 1h11v12H.5z" stroke="#aaa" /><path d="M0 1h12" stroke="#aaa" strokeWidth="2" /><path d="M6.500 4v6l4-3z" fill="#aaa" /></Svg></button>
        <button aria-label="Minimize document"><MinIcon color="#aaa" /></button>
        <button aria-label="Restore document"><RestoreIcon color="#aaa" /></button>
        <button aria-label="Close document"><CloseIcon color="#aaa" /></button>
      </div>
    </div>
  );
}

const TREE = [
  ["History", HistoryIcon, 1], ["Sensors", SensorIcon, 0], ["Annotations", AnnoIcon, 1], ["Solid Bodies(3)", SolidIcon, 1],
  ["Material <not specified>", MaterialIcon, 0], ["Front Plane", PlaneIcon, 0], ["Top Plane", PlaneIcon, 0], ["Right Plane", PlaneIcon, 0],
  ["Origin", OriginIcon, 0], ["Boss-Extrude1", BossIcon, 1], ["Dome1", DomeIcon, 0], ["Plane1", PlaneIcon, 0],
  ["Boss-Extrude2", BossIcon, 1], ["Revolve1", RevolveIcon, 1], ["Fillet1", FilletIcon, 0], ["Shell5", ShellIcon, 0],
  ["Cut-Extrude1", CutIcon, 1], ["Boss-Extrude3", BossIcon, 1], ["Plane2", PlaneIcon, 0], ["Boss-Extrude4", BossIcon, 1], ["Cut-Extrude2", CutIcon, 1],
];

const PANEL_TABS = [
  ["Feature tree", <PartIcon />], ["Properties", <PropsIcon />], ["Configurations", <ConfigIcon />],
  ["Dimension expert", <TargetIcon />], ["Display manager", <BallIcon dark />],
];

const Dot = () => <span className="block size-1.5 rounded-full border border-[#999] bg-[#d0d0d0]" />;

function FeaturePanel() {
  return (
    <aside className="relative z-10 flex w-[277px] shrink-0 flex-col border-r border-[#808080] bg-[#f7f7f7]">
      <div className="mr-0.5 mt-1 flex h-[21px] items-center justify-center border-y border-[#c9c9c9]"><Dot /></div>
      <div className="mr-0.5 mt-1 flex h-[26px] border-b border-[#aaa] pl-0.5">
        {PANEL_TABS.map(([name, icon], i) => (
          <button
            key={name}
            aria-label={name}
            className={`flex w-10 items-center justify-center border-r border-t border-[#999] ${i === 0 ? "bg-[#f7f7f7]" : "bg-[#d4d4d4]"}`}
          >
            {icon}
          </button>
        ))}
        <button aria-label="More tabs" className="ml-auto mr-1.5"><Svg w={8} h={12}><path d="M1.500 1.500L6 6l-4.500 4.500" stroke="#333" strokeWidth="2" /></Svg></button>
      </div>
      <label className="ml-[5px] mr-[5px] flex h-8 items-center border border-[#c3c3c3] pl-0.5">
        <FunnelIcon />
        <input aria-label="Filter tree" className="w-0 flex-1 bg-transparent text-[14px] outline-none" />
      </label>
      <div className="flex flex-1 flex-col border-l border-[#c3c3c3] pr-0.5 text-[14px] text-black">
        <button className="flex h-6 items-center whitespace-nowrap pl-1"><PartIcon /><span className="ml-1">water tank (Default) &lt;&lt;Default&gt;_Disp</span></button>
        <ul>
          {TREE.map(([name, Icon, open]) => (
            <li key={name} className="flex h-6 items-center">
              <span className="w-[25px] pl-[9px]">
                {open ? <button aria-label={`Expand ${name}`} className="block"><Svg w={4} h={8}><path d="M0 0l4 4-4 4z" fill="#666" /></Svg></button> : null}
              </span>
              <button className="flex items-center whitespace-nowrap"><span className="flex w-[19px] justify-center"><Icon /></span><span className="ml-[5px]">{name}</span></button>
            </li>
          ))}
        </ul>
        <div className="h-1 shrink-0 bg-[#3b8bc6]" />
        <div className="mt-auto flex h-5 shrink-0 items-center bg-[#f0f0f0]"><div className="ml-[21px] h-[3px] w-[177px] rounded bg-[#888]" /></div>
      </div>
      <div className="mb-0.5 mr-0.5 mt-0.5 h-px bg-[#b5b5b5]" />
      <button aria-label="Hide panel" className="absolute -right-3 top-[375px] flex h-[49px] w-3 items-center justify-center border border-l-0 border-[#808080] bg-[#f7f7f7]"><Dot /></button>
    </aside>
  );
}

function Ring({ cy }) {
  return (
    <g>
      <ellipse cx="1106.500" cy={cy} rx="181" ry="104.500" stroke="#000" strokeWidth="13.800" />
      <ellipse cx="1106.500" cy={cy} rx="181" ry="104.500" stroke="url(#ringDark)" strokeWidth="11.600" />
      <ellipse cx="1106.500" cy={cy - 1} rx="181" ry="104.500" stroke="url(#ringEdge)" strokeWidth="10.500" />
      <ellipse cx="1106.500" cy={cy - 2} rx="181" ry="104.500" stroke="url(#ringMid)" strokeWidth="9" />
      <ellipse cx="1106.500" cy={cy - 2.500} rx="181" ry="104.500" stroke="url(#ringHi)" strokeWidth="2.500" />
    </g>
  );
}

function BodySection({ cy }) {
  return <path d={`M925.500 421V${cy}A181 104.500 0 0 0 1287.500 ${cy}V421z`} fill="url(#body)" stroke="#000" strokeWidth="1.200" />;
}

function Tank() {
  const k = { stroke: "#000", strokeWidth: 1.200, strokeLinejoin: "round" };
  return (
    <svg width="400" height="580" viewBox="899 280 400 580" fill="none" role="img" aria-label="Water tank model">
      <defs>
        <linearGradient id="body" gradientUnits="userSpaceOnUse" x1="925" y1="0" x2="1287" y2="0">
          <stop stopColor="#061849" /><stop offset=".1" stopColor="#081f5c" /><stop offset=".22" stopColor="#0a2a80" /><stop offset=".36" stopColor="#0c36a2" />
          <stop offset=".52" stopColor="#0f3fbd" /><stop offset=".75" stopColor="#1041c4" /><stop offset=".9" stopColor="#0e38aa" /><stop offset="1" stopColor="#0b2d8a" />
        </linearGradient>
        <linearGradient id="ringDark" gradientUnits="userSpaceOnUse" x1="919" y1="0" x2="1294" y2="0">
          <stop stopColor="#1550e8" /><stop offset=".15" stopColor="#0b2d88" /><stop offset=".5" stopColor="#0a2873" /><stop offset=".85" stopColor="#0d38a4" /><stop offset="1" stopColor="#1756f0" />
        </linearGradient>
        <linearGradient id="ringEdge" gradientUnits="userSpaceOnUse" x1="919" y1="0" x2="1294" y2="0">
          <stop stopColor="#1550f0" /><stop offset=".15" stopColor="#1148d4" /><stop offset=".5" stopColor="#114ad0" /><stop offset=".85" stopColor="#134fe0" /><stop offset="1" stopColor="#185afa" />
        </linearGradient>
        <linearGradient id="ringMid" gradientUnits="userSpaceOnUse" x1="919" y1="0" x2="1294" y2="0">
          <stop stopColor="#1557ff" /><stop offset=".4" stopColor="#195efc" /><stop offset=".56" stopColor="#2170ff" /><stop offset=".75" stopColor="#1c66ff" /><stop offset="1" stopColor="#1c62ff" />
        </linearGradient>
        <linearGradient id="ringHi" gradientUnits="userSpaceOnUse" x1="919" y1="0" x2="1294" y2="0">
          <stop offset=".3" stopColor="#1f66ff" stopOpacity="0" /><stop offset=".57" stopColor="#58a6ff" /><stop offset=".75" stopColor="#2570ff" stopOpacity=".4" /><stop offset="1" stopColor="#2570ff" stopOpacity="0" />
        </linearGradient>
        <linearGradient id="dome" gradientUnits="userSpaceOnUse" x1="926" y1="370" x2="1090" y2="470">
          <stop stopColor="#0f45d2" /><stop offset=".45" stopColor="#1453fa" /><stop offset="1" stopColor="#1a66ff" />
        </linearGradient>
        <radialGradient id="shine" gradientUnits="userSpaceOnUse" cx="1128" cy="520" r="95">
          <stop stopColor="#58a8ff" /><stop offset=".45" stopColor="#3284ff" stopOpacity=".6" /><stop offset="1" stopColor="#1a66ff" stopOpacity="0" />
        </radialGradient>
        <linearGradient id="domeRight" gradientUnits="userSpaceOnUse" x1="1130" y1="0" x2="1287" y2="0">
          <stop stopColor="#1453ff" stopOpacity="0" /><stop offset="1" stopColor="#1450ff" />
        </linearGradient>
        <linearGradient id="hole" gradientUnits="userSpaceOnUse" x1="1039" y1="0" x2="1173" y2="0">
          <stop stopColor="#0c35a0" /><stop offset=".3" stopColor="#0f3fba" /><stop offset=".6" stopColor="#0d37a4" /><stop offset=".85" stopColor="#081f60" /><stop offset="1" stopColor="#06184c" />
        </linearGradient>
        <linearGradient id="neck" gradientUnits="userSpaceOnUse" x1="1028" y1="0" x2="1184" y2="0">
          <stop stopColor="#07205f" /><stop offset=".3" stopColor="#0c36a2" /><stop offset=".6" stopColor="#1041c4" /><stop offset="1" stopColor="#0e3ab2" />
        </linearGradient>
        <linearGradient id="floor" gradientUnits="userSpaceOnUse" x1="1050" y1="0" x2="1163" y2="0">
          <stop stopColor="#cdcdcd" /><stop offset=".5" stopColor="#b4b4b4" /><stop offset="1" stopColor="#bababa" />
        </linearGradient>
        <clipPath id="holeClip"><ellipse cx="1106.300" cy="355" rx="67" ry="38.700" /></clipPath>
      </defs>

      <path d="M925.500 600V745C925.500 805 1006 853.300 1106.500 853.300S1287.500 805 1287.500 745V600z" fill="url(#body)" {...k} />
      <path d="M926 750C930 807 1006 853 1106.500 853S1283 807 1287 750C1282 803 1206 850 1106.500 850S931 803 926 750z" fill="#04103a" opacity=".55" />
      <Ring cy={652.700} /><BodySection cy={646.500} />
      <Ring cy={584.600} /><BodySection cy={578.400} />
      <Ring cy={516.500} /><BodySection cy={510.300} />
      <Ring cy={448.400} /><BodySection cy={442.200} />

      <ellipse cx="1106.500" cy="414.400" rx="180.300" ry="104" fill="url(#dome)" {...k} />
      <path d="M925.500 422V414M1287.500 422V414" {...k} />
      <ellipse cx="1106.500" cy="414.400" rx="179.700" ry="103.500" fill="url(#domeRight)" />
      <ellipse cx="1106.500" cy="414.400" rx="179.700" ry="103.500" fill="url(#shine)" />
      <path d="M1046 316Q1106 305 1167 316L1150 330H1062z" fill="#0f3cb6" />

      <path d="M965 303.700L1032 342L1028.500 351.500Q995 344 965 349.700z" fill="#09277a" {...k} />
      <path d="M994.300 287.300L1053.500 321.500L1032 342L965 303.700Q978 295 994.300 287.300z" fill="#175eff" {...k} />
      <path d="M1247.700 303.700L1181 342L1184.500 351.500Q1218 344 1247.700 349.700z" fill="#0f3dba" {...k} />
      <path d="M1218.300 287.300L1159.500 321.500L1181 342L1247.700 303.700Q1235 295 1218.300 287.300z" fill="#175eff" {...k} />

      <path d="M1028.300 355.500V377A78 45 0 0 0 1184.300 377V355.500z" fill="url(#neck)" />
      <path d="M1028.300 355V378M1184.300 355V380" {...k} />
      <ellipse cx="1106.300" cy="355.500" rx="78" ry="45" fill="#175eff" {...k} />
      <ellipse cx="1106.300" cy="355" rx="67" ry="38.700" fill="url(#hole)" />
      <g clipPath="url(#holeClip)">
        <ellipse cx="1106.300" cy="374.700" rx="67" ry="38.700" {...k} />
        <ellipse cx="1106.300" cy="398" rx="67" ry="38.700" fill="url(#floor)" {...k} />
        <path d="M1057 357l4-2M1069.500 350.500l3.500-1M1083.500 346.500l4-1M1112 344.500h3M1126 346l4 .5M1140 349.500l4 1.500M1161 361l3 2" stroke="#000" strokeWidth="1.600" />
      </g>
      <ellipse cx="1106.300" cy="355" rx="67" ry="38.700" {...k} />

      <path d="M965 434L994.300 450.700V499L979 492L965 481.500z" fill="url(#body)" />
      <path d="M994.300 450.700L1063 411V420.500Q1030 452 994.300 496z" fill="#0e3bb2" {...k} />
      <path d="M1033.500 394.300L1063 411L994.300 450.700L965 434z" fill="#175eff" {...k} />
      <path d="M965 434V478.500M994.300 450.700V496" {...k} />

      <path d="M1247.700 434L1218.300 450.700V499L1234 492L1247.700 481.500z" fill="url(#body)" />
      <path d="M1218.300 450.700L1149.700 411V420.500Q1183 452 1218.300 496z" fill="#09277a" {...k} />
      <path d="M1179.500 394.300L1149.700 411L1218.300 450.700L1247.700 434z" fill="#175eff" {...k} />
      <path d="M1247.700 434V478.500M1218.300 450.700V496" {...k} />
    </svg>
  );
}

const HUD = [
  ["Zoom to fit", <ZoomIcon />, 0], ["Zoom to area", <ZoomIcon area />, 0], ["Previous view", <PrevViewIcon />, 0], ["Section view", <SectionIcon />, 0],
  ["Dynamic annotation views", <DynIcon />, 0], ["View orientation", <ViewIcon />, 1], ["Display style", <StyleIcon />, 1], ["Hide/show items", <EyeIcon />, 1],
  ["Edit appearance", <BallPenIcon />, 0], ["Apply scene", <SceneIcon />, 1], ["View settings", <MonitorIcon />, 1],
];

const TASKS = [
  ["Resources", <HomeIcon w={19} h={19} />], ["Design library", <BooksIcon />], ["File explorer", <FolderOpenIcon />],
  ["View palette", <PaletteIcon />], ["Appearances", <BallIcon />], ["Custom properties", <PropsIcon />],
];

function Viewport() {
  return (
    <main className="relative flex flex-1 flex-col items-center bg-white">
      <div role="toolbar" aria-label="View tools" className="flex h-[30px] items-center pr-0.5">
        {HUD.map(([name, icon, menu]) => (
          <div key={name} className="flex items-center">
            <button aria-label={name} className="flex w-[26px] justify-center">{icon}</button>
            {menu > 0 && <CaretButton label={`${name} options`} color="#888" className="h-5 w-[14px]" />}
          </div>
        ))}
      </div>
      <div className="mt-[100px]"><Tank /></div>
      <div className="absolute bottom-0 left-3">
        <svg width="76" height="70" viewBox="0 0 76 70" fill="none" role="img" aria-label="View axes" className="ml-[3px] overflow-visible">
          <path d="M36 46V24" stroke="#1e7d1e" strokeWidth="3.500" /><path d="M35.500 44V26" stroke="#7ad07a" strokeWidth="1" />
          <path d="M36 15l-4 9q4 3 8 0z" fill="#0b5c0b" /><path d="M36 15l-2 4h3.500z" fill="#4fc04f" />
          <path d="M36 46l17 9" stroke="#a80000" strokeWidth="3.500" /><path d="M50 58l5-7.500 7.500 9.500z" fill="#a80000" />
          <path d="M36 46l-17 9" stroke="#0000a0" strokeWidth="3.500" /><path d="M22 58l-5-7.500L9.500 60z" fill="#0000a0" />
          <text x="38" y="10" textAnchor="middle" fontFamily="DejaVu Sans, sans-serif" fontSize="10" fill="#2a8a2a">Y</text>
          <text x="69" y="63" textAnchor="middle" fontFamily="DejaVu Sans, sans-serif" fontSize="10" fill="#f06060">X</text>
          <text x="5" y="63" textAnchor="middle" fontFamily="DejaVu Sans, sans-serif" fontSize="10" fill="#1a1ae0">Z</text>
        </svg>
        <p className="mb-[3px] mt-[23px] font-['Lato',sans-serif] text-[18px] font-medium leading-[18px] text-black">*Isometric</p>
      </div>
      <nav aria-label="Task pane" className="absolute right-0 top-[30px] w-[33px] border-l border-t border-[#808080]">
        {TASKS.map(([name, icon], i) => (
          <button key={name} aria-label={name} className={`flex h-[30px] w-full items-center justify-center border-b border-[#808080] ${i === 0 ? "bg-[#f7f7f7]" : "bg-[#d4d4d4]"}`}>{icon}</button>
        ))}
      </nav>
    </main>
  );
}

const NAV = [
  ["First", "M5 2v10M13 2L7 7l6 5z"], ["Previous", "M11 2L5 7l6 5z"], ["Next", "M6 2l6 5-6 5z"], ["Last", "M12.500 2v10M4 2l6 5-6 5z"],
];

export default function App() {
  return (
    <div className="flex h-screen flex-col overflow-hidden bg-[#f7f7f7] font-['Noto_Sans','Open_Sans',sans-serif]">
      <TitleBar />
      <Ribbon />
      <CommandTabs />
      <div className="flex min-h-0 flex-1">
        <FeaturePanel />
        <Viewport />
      </div>
      <div className="flex h-[21px] shrink-0 border-y border-[#808080] bg-[#f7f7f7] text-[15px] leading-[17px]">
        <div className="ml-0.5 flex border-r border-[#808080] bg-[#9698ad]">
          {NAV.map(([name, d]) => (
            <button key={name} aria-label={`${name} tab`} className="flex w-5 items-center justify-center border border-[#85879d] bg-[#a9abc0]"><Svg w={17} h={14}><path d={d} fill="#8789a2" stroke="#8789a2" /></Svg></button>
          ))}
        </div>
        <div role="tablist" className="flex">
          <button role="tab" aria-selected="true" className="w-[76px] border-r border-[#808080] bg-[#f7f7f7] pb-0.5 font-bold text-black">Model</button>
          <button role="tab" aria-selected="false" className="w-[89px] border-r border-[#808080] bg-[#d4d4d4] pb-0.5 text-[#222]">3D Views</button>
          <button role="tab" aria-selected="false" className="w-[144px] border-r border-[#808080] bg-[#d4d4d4] pb-0.5 pr-3 text-[#222]">Motion Study 1</button>
        </div>
      </div>
      <footer className="flex h-[21px] shrink-0 items-center bg-[#f7f7f7] pl-px pr-1 pt-0.5 text-[14px] leading-[19px] text-black">
        <span className="flex-1">SOLIDWORKS Premium 2023 SP5.0</span>
        <button className="flex items-center gap-[25px]">MMGS <Svg w={6} h={4}><path d="M0 4h6L3 .5z" fill="#333" /></Svg></button>
        <button aria-label="Tags" className="ml-[25px]">
          <Svg w={18} h={15}>
            <path d="M1.500 3.500L5.500 1 16.500 7.500 12 13.500 2 9z" fill="#eee" stroke="#333" />
            <path d="M1.500 3.500L12.500 9.500 16.500 7.500M12.500 9.500L12 13.500M2 6.500l10 5" stroke="#333" strokeWidth=".9" />
            <circle cx="8" cy="5.500" r="1.700" fill="#fff" stroke="#333" strokeWidth=".9" />
          </Svg>
        </button>
      </footer>
    </div>
  );
}
